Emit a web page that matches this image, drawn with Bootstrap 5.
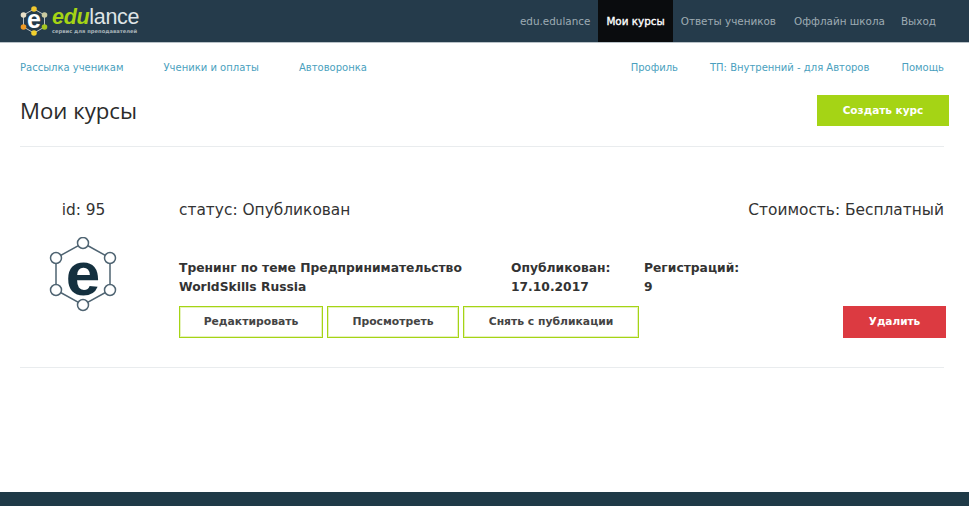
<!DOCTYPE html>
<html lang="ru"><head><meta charset="utf-8">
<link href="https://cdn.jsdelivr.net/npm/bootstrap@5.3.0/dist/css/bootstrap.min.css" rel="stylesheet">
<style>
html,body{height:506px;overflow:hidden}
body{font-family:"DejaVu Sans","Open Sans",sans-serif;color:#333;background:#fff;display:flex;flex-direction:column}
.topbar{height:43px;background:#253b4b;padding-left:20px;padding-right:25px;border-bottom:1px solid #b9c2c8;flex:none}
.brand{display:flex;gap:4px;align-items:center;height:42px;text-decoration:none}
.brandtext{display:flex;flex-direction:column;line-height:1;margin-top:-1px}
.brandname{font:300 21.500px/21px "Liberation Sans",sans-serif;color:#dfe4e6;letter-spacing:-.3px}
.brandname b{font-style:italic;font-weight:700;color:#a5d415}
.brandsub{font:700 5.200px/6px "DejaVu Sans",sans-serif;color:#a9b4ba;white-space:nowrap}
.topnav a{display:block;height:42px;line-height:43px;padding:0 8px;font-size:10.400px;color:#9eabb3;text-decoration:none;white-space:nowrap}
.topnav a.on{background:#0a0c0e;color:#fff;-webkit-text-stroke:.35px #fff}
.topnav a.gap-a{margin-left:2px}
.subnav{padding:0 25px 0 20px;height:49px;flex:none}
.subnav a{font-size:10px;color:#4a9fbe;text-decoration:none;white-space:nowrap}
.headrow{padding:3px 20px 0;height:54px;flex:none}
.headrow h1{font-size:22.200px;font-weight:400;margin:0;color:#2b2b2b;line-height:31px;font-family:"Open Sans",sans-serif}
.btn-create{width:132px;height:31px;background:#a5d415;color:#fff;font-size:10.500px;font-weight:700;border:0;border-radius:0;padding:0}
.rule{margin:0 25px 0 20px;border-top:1px solid #e9ecee;flex:none}
.course{margin:0 25px 0 20px;height:220px;flex:none}
.idcol{width:127px;padding-top:53px;flex:none}
.idcol div{font-size:15.400px;line-height:20px;color:#333;margin-bottom:17px}
.idcol svg{margin-left:-1px}
.maincol{padding-left:32px;padding-top:53px;min-width:0}
.status{font-size:15.400px;line-height:20px;height:20px}
.info{margin-top:39px;font-size:12.300px;font-weight:700;line-height:19px;color:#333;height:38px}
.i1{width:332px}.i2{width:133px}
.acts{margin-top:9px;gap:4px;margin-right:-2px}
.btn-line{height:32px;border:1px solid #a5d415;box-shadow:inset 0 0 0 1px #e6f3bd;border-radius:0;background:#fff;color:#444;font-size:10.800px;font-weight:700;padding:0}
.bw1{width:144px}.bw2{width:132px}.bw3{width:176px}
.btn-del{width:103px;height:32px;background:#dc3a41;color:#fff;font-size:10.500px;font-weight:700;border:0;border-radius:0;padding:0}
.footbar{margin-top:auto;height:14px;background:#1f3a47;flex:none}
</style></head><body>
<nav class="topbar d-flex justify-content-between">
<a class="brand" href="#">
<svg width="28" height="32" viewBox="0 0 28 32"><path d="M14 4L24.500 10V22L14 28L3.500 22V10Z" stroke="#b7c0c5" stroke-width="1" fill="none"/><circle cx="14" cy="4" r="2.800" fill="#f2c82e"/><circle cx="24.500" cy="10" r="2.800" fill="#c9c9a0"/><circle cx="24.500" cy="22" r="2.800" fill="#a5c520"/><circle cx="14" cy="28" r="2.800" fill="#f2d02e"/><circle cx="3.500" cy="22" r="2.800" fill="#ee9a24"/><circle cx="3.500" cy="10" r="2.800" fill="#e8e0c8"/><text x="14" y="22.500" text-anchor="middle" font-family="Liberation Sans" font-weight="700" font-size="25" fill="#fff">e</text></svg>
<span class="brandtext"><span class="brandname"><b>edu</b>lance</span><span class="brandsub">сервис для преподавателей</span></span>
</a>
<div class="topnav d-flex"><a href="#">edu.edulance</a><a class="on" href="#">Мои курсы</a><a href="#">Ответы учеников</a><a class="gap-a" href="#">Оффлайн школа</a><a href="#">Выход</a></div>
</nav>
<div class="subnav d-flex justify-content-between align-items-center">
<div class="d-flex" style="gap:40px"><a href="#">Рассылка ученикам</a><a href="#">Ученики и оплаты</a><a href="#">Автоворонка</a></div>
<div class="d-flex" style="gap:32px"><a href="#">Профиль</a><a href="#">ТП: Внутренний - для Авторов</a><a href="#">Помощь</a></div>
</div>
<div class="headrow d-flex justify-content-between align-items-start">
<h1 class="mt-0">Мои курсы</h1>
<button class="btn btn-create">Создать курс</button>
</div>
<div class="rule"></div>
<div class="course d-flex">
<div class="idcol text-center"><div>id: 95</div>
<svg width="70" height="76" viewBox="0 0 70 76"><path d="M35 6L62 21V53L35 68L8 53V21Z" fill="none" stroke="#4f6472" stroke-width="1.500"/><g fill="#fff" stroke="#4f6472" stroke-width="1.500"><circle cx="35" cy="6" r="5.500"/><circle cx="62" cy="21" r="5.500"/><circle cx="62" cy="53" r="5.500"/><circle cx="35" cy="68" r="5.500"/><circle cx="8" cy="53" r="5.500"/><circle cx="8" cy="21" r="5.500"/></g><text x="35" y="58" text-anchor="middle" font-family="Liberation Sans" font-weight="700" font-size="62" fill="#14303f">e</text></svg>
</div>
<div class="maincol flex-grow-1">
<div class="status d-flex justify-content-between"><span>статус: Опубликован</span><span>Стоимость: Бесплатный</span></div>
<div class="info d-flex"><div class="i1">Тренинг по теме Предпринимательство<br>WorldSkills Russia</div><div class="i2">Опубликован:<br>17.10.2017</div><div>Регистраций:<br>9</div></div>
<div class="acts d-flex"><button class="btn btn-line bw1">Редактировать</button><button class="btn btn-line bw2">Просмотреть</button><button class="btn btn-line bw3">Снять с публикации</button><button class="btn btn-del ms-auto">Удалить</button></div>
</div>
</div>
<div class="rule"></div>
<div class="footbar"></div>
</body></html>
